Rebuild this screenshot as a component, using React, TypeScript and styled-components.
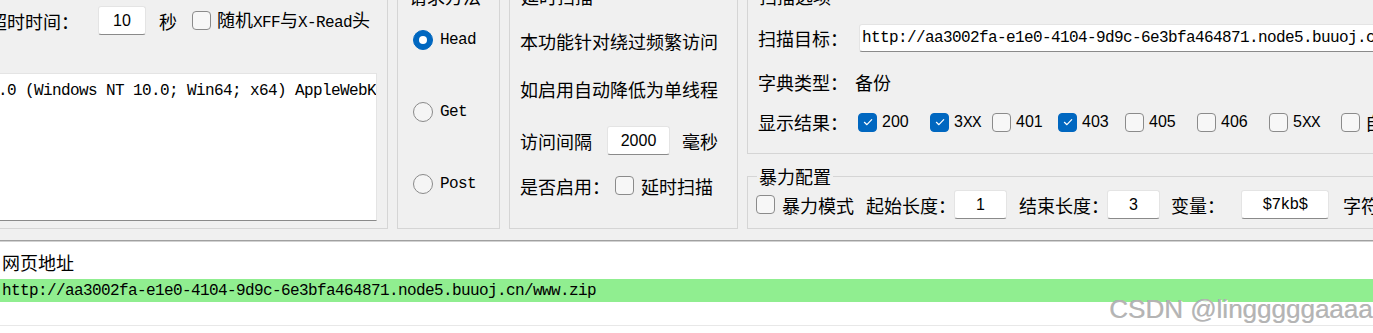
import React from "react";
import styled, { createGlobalStyle } from "styled-components";

const GlobalStyle = createGlobalStyle`
  html, body { margin: 0; padding: 0; }
  body { background: #ffffff; overflow: hidden; }
  #root { width: 1373px; height: 333px; }
`;

const CJK = `"Noto Sans CJK SC", "Noto Sans", sans-serif`;

const Window = styled.div`
  position: relative;
  width: 1373px;
  height: 333px;
  overflow: hidden;
  display: flex;
  flex-direction: column;
  font-family: ${CJK};
  font-size: 18px;
  color: #000;
`;

const TopPanel = styled.div`
  flex: none;
  height: 240px;
  background: #f0f0f0;
  overflow: hidden;
`;

const GroupRow = styled.div`
  display: flex;
  align-items: stretch;
  gap: 9px;
  height: 243px;
  margin: -14px 0 0 -95px;
`;

const Column = styled.div<{ $w: number }>`
  flex: none;
  width: ${(p) => p.$w}px;
  display: flex;
  flex-direction: column;
  gap: 12px;
`;

const Group = styled.fieldset<{ $w?: number; $h?: number }>`
  box-sizing: border-box;
  flex: ${(p) => (p.$w || p.$h ? "none" : "1")};
  width: ${(p) => (p.$w ? `${p.$w}px` : "auto")};
  height: ${(p) => (p.$h ? `${p.$h}px` : "auto")};
  min-width: 0;
  margin: 0;
  padding: 0;
  border: 1px solid #d5d5d5;
  display: flex;
  flex-direction: column;
`;

const Legend = styled.legend`
  margin-left: 9px;
  padding: 0 2px;
  height: 20px;
  line-height: 20px;
  font-size: 18px;
  white-space: nowrap;
`;

const Body = styled.div<{ $pad: string; $rows: string; $gap?: number }>`
  flex: 1;
  min-height: 0;
  display: grid;
  grid-template-rows: ${(p) => p.$rows};
  row-gap: ${(p) => p.$gap ?? 0}px;
  align-content: start;
  padding: ${(p) => p.$pad};
`;

const FormRow = styled.div<{ $cols: string; $indent?: number }>`
  display: grid;
  grid-template-columns: ${(p) => p.$cols};
  align-items: center;
  justify-items: start;
  white-space: nowrap;
  min-width: 0;
  padding-left: ${(p) => p.$indent ?? 0}px;
`;

const Text = styled.span`
  font-family: ${CJK};
  font-size: 18px;
  line-height: 24px;
  white-space: nowrap;
`;

const Mono = styled.span`
  font-family: "Liberation Mono", monospace;
  font-size: 16px;
  letter-spacing: -0.6px;
`;

const Num = styled.span`
  font-family: "Liberation Sans", sans-serif;
  font-size: 16px;
`;

const TextBox = styled.div<{ $w: number; $h?: number; $left?: boolean }>`
  box-sizing: border-box;
  width: ${(p) => p.$w}px;
  height: ${(p) => p.$h ?? 29}px;
  background: #fff;
  border: 1px solid #e4e4e4;
  border-bottom: 1px solid #8a8a8a;
  border-radius: 3px;
  display: flex;
  align-items: center;
  justify-content: ${(p) => (p.$left ? "flex-start" : "center")};
  padding: 0 2px;
  overflow: hidden;
  white-space: nowrap;
`;

const MultiLine = styled.div`
  box-sizing: border-box;
  min-height: 0;
  background: #fff;
  border: 1px solid #e4e4e4;
  border-bottom: 1px solid #8a8a8a;
  padding: 4px 0 0 0;
  line-height: 18px;
  overflow: hidden;
  white-space: nowrap;
`;

const CheckBox = styled.span<{ $checked?: boolean }>`
  box-sizing: border-box;
  flex: none;
  width: 19px;
  height: 19px;
  border-radius: 4px;
  border: 1px solid ${(p) => (p.$checked ? "#0067c0" : "#8b8b8b")};
  background: ${(p) => (p.$checked ? "#0067c0" : "#f7f7f7")};
  display: inline-flex;
  align-items: center;
  justify-content: center;
`;

const RadioDot = styled.span<{ $checked?: boolean }>`
  box-sizing: border-box;
  width: 20px;
  height: 20px;
  border-radius: 50%;
  border: 1px solid ${(p) => (p.$checked ? "#0067c0" : "#8a8a8a")};
  background: ${(p) => (p.$checked ? "#0067c0" : "#f5f5f5")};
  display: inline-flex;
  align-items: center;
  justify-content: center;
  &::after {
    content: "";
    display: ${(p) => (p.$checked ? "block" : "none")};
    width: 8px;
    height: 8px;
    border-radius: 50%;
    background: #fff;
  }
`;

const Options = styled.div`
  display: flex;
  align-items: center;
`;

const CheckItem = styled.label<{ $w: number }>`
  flex: none;
  width: ${(p) => p.$w}px;
  display: flex;
  align-items: center;
  gap: 5px;
  white-space: nowrap;
`;

const ItemLabel = styled.span`
  font-family: "Liberation Sans", sans-serif;
  font-size: 16px;
  line-height: 20px;
  white-space: nowrap;
`;

const ResultList = styled.div`
  position: relative;
  flex: 1;
  background: #fff;
  border-top: 1px solid #a0a0a0;
  box-shadow: inset 0 1px 0 #d2d2d2;
`;

const ListFrame = styled.div`
  height: 84px;
  border-bottom: 1px solid #e8e8e8;
  display: flex;
  flex-direction: column;
`;

const ColumnHeader = styled.div`
  flex: none;
  box-sizing: border-box;
  height: 38px;
  padding: 3px 0 0 2px;
  display: flex;
  align-items: center;
`;

const ResultRow = styled.div`
  flex: none;
  height: 23px;
  background: #90ee90;
  padding-left: 2px;
  display: flex;
  align-items: center;
  white-space: nowrap;
`;

const Watermark = styled.div`
  position: absolute;
  right: 0;
  top: 55px;
  font-family: "Liberation Sans", sans-serif;
  font-size: 26px;
  line-height: 26px;
  color: #b4b4b4;
  text-shadow: 1px 1px 0 #ffffff, -0.5px -0.5px 0 rgba(110, 110, 110, 0.4);
  white-space: nowrap;
  pointer-events: none;
`;

const Tick = () => (
  <svg width="12" height="12" viewBox="0 0 12 12" fill="none">
    <path d="M2.4 6.3 L4.9 8.7 L9.7 3.6" stroke="#fff" strokeWidth="1.2" strokeLinecap="round" strokeLinejoin="round" />
  </svg>
);

const Check = ({ checked }: { checked?: boolean }) => (
  <CheckBox $checked={checked}>{checked && <Tick />}</CheckBox>
);

const statuses: { label: React.ReactNode; checked: boolean; w: number }[] = [
  { label: <Num>200</Num>, checked: true, w: 72 },
  { label: <><Num>3</Num><Mono>XX</Mono></>, checked: true, w: 62 },
  { label: <Num>401</Num>, checked: false, w: 66 },
  { label: <Num>403</Num>, checked: true, w: 67 },
  { label: <Num>405</Num>, checked: false, w: 72 },
  { label: <Num>406</Num>, checked: false, w: 72 },
  { label: <><Num>5</Num><Mono>XX</Mono></>, checked: false, w: 72 },
  { label: <Text>自定义</Text>, checked: false, w: 100 },
];

const methods = [
  { name: "Head", checked: true },
  { name: "Get", checked: false },
  { name: "Post", checked: false },
];

const UA =
  "Mozilla/5.0 (Windows NT 10.0; Win64; x64) AppleWebKit/537.36 (KHTML, like Gecko) Chrome/120.0.0.0 Safari/537.36";
const TARGET = "http://aa3002fa-e1e0-4104-9d9c-6e3bfa464871.node5.buuoj.cn";

export default function App() {
  return (
    <>
      <GlobalStyle />
      <Window>
        <TopPanel>
          <GroupRow>
            <Group $w={483}>
              <Legend>基础配置</Legend>
              <Body $pad="0 10px 7px 10px" $rows="29px 1fr" $gap={38}>
                <FormRow $cols="109px 61px 33px 25px auto" $indent={73}>
                  <Text>超时时间：</Text>
                  <TextBox $w={48}>
                    <Num>10</Num>
                  </TextBox>
                  <Text>秒</Text>
                  <Check />
                  <Text>
                    随机<Mono>XFF</Mono>与<Mono>X-Read</Mono>头
                  </Text>
                </FormRow>
                <MultiLine>
                  <Mono>{UA}</Mono>
                </MultiLine>
              </Body>
            </Group>

            <Group $w={103}>
              <Legend>请求方法</Legend>
              <Body $pad="24px 0 0 15px" $rows="20px 20px 20px" $gap={52}>
                {methods.map((m) => (
                  <FormRow key={m.name} $cols="27px auto">
                    <RadioDot $checked={m.checked} />
                    <Mono>{m.name}</Mono>
                  </FormRow>
                ))}
              </Body>
            </Group>

            <Group $w={229}>
              <Legend>延时扫描</Legend>
              <Body $pad="11px 0 0 10px" $rows="48px 48px 55px 35px">
                <FormRow $cols="auto">
                  <Text>本功能针对绕过频繁访问</Text>
                </FormRow>
                <FormRow $cols="auto">
                  <Text>如启用自动降低为单线程</Text>
                </FormRow>
                <FormRow $cols="87px 75px auto">
                  <Text>访问间隔</Text>
                  <TextBox $w={63}>
                    <Num>2000</Num>
                  </TextBox>
                  <Text>毫秒</Text>
                </FormRow>
                <FormRow $cols="95px 26px auto">
                  <Text>是否启用：</Text>
                  <Check />
                  <Text>延时扫描</Text>
                </FormRow>
              </Body>
            </Group>

            <Column $w={760}>
              <Group $h={168}>
                <Legend>扫描选项</Legend>
                <Body $pad="12px 0 0 10px" $rows="40px 48px 32px">
                  <FormRow $cols="101px auto">
                    <Text>扫描目标：</Text>
                    <TextBox $w={620} $h={28} $left>
                      <Mono>{TARGET}</Mono>
                    </TextBox>
                  </FormRow>
                  <FormRow $cols="97px auto">
                    <Text>字典类型：</Text>
                    <Text>备份</Text>
                  </FormRow>
                  <FormRow $cols="100px auto">
                    <Text>显示结果：</Text>
                    <Options>
                      {statuses.map((s, i) => (
                        <CheckItem key={i} $w={s.w}>
                          <Check checked={s.checked} />
                          <ItemLabel>{s.label}</ItemLabel>
                        </CheckItem>
                      ))}
                    </Options>
                  </FormRow>
                </Body>
              </Group>
              <Group>
                <Legend>暴力配置</Legend>
                <Body $pad="4px 0 9px 8px" $rows="29px">
                  <FormRow $cols="26px 84px 88px 65px 88px 64px 70px 102px auto">
                    <Check />
                    <Text>暴力模式</Text>
                    <Text>起始长度：</Text>
                    <TextBox $w={53}>
                      <Num>1</Num>
                    </TextBox>
                    <Text>结束长度：</Text>
                    <TextBox $w={53}>
                      <Num>3</Num>
                    </TextBox>
                    <Text>变量：</Text>
                    <TextBox $w={88}>
                      <Mono>$7kb$</Mono>
                    </TextBox>
                    <Text>字符集：</Text>
                  </FormRow>
                </Body>
              </Group>
            </Column>
          </GroupRow>
        </TopPanel>

        <ResultList>
          <ListFrame>
            <ColumnHeader>
              <Text>网页地址</Text>
            </ColumnHeader>
            <ResultRow>
              <Mono>{TARGET}/www.zip</Mono>
            </ResultRow>
          </ListFrame>
          <Watermark>CSDN @lingggggaaaa</Watermark>
        </ResultList>
      </Window>
    </>
  );
}
